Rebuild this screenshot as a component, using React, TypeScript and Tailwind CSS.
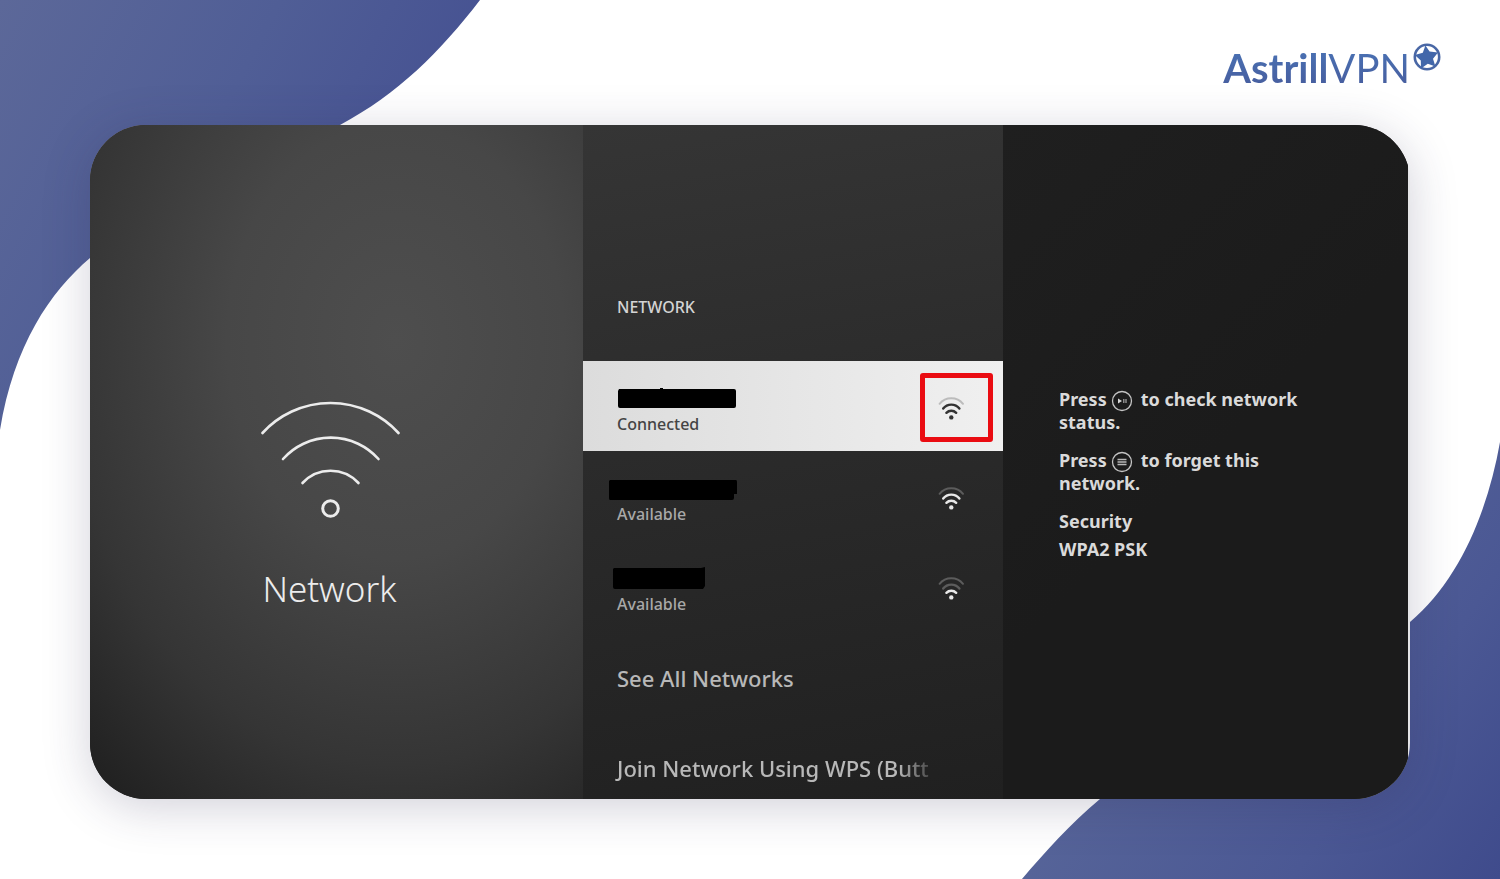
import type { ReactNode } from 'react';
import clsx from 'clsx';

const networks = [
  {
    status: 'Connected',
    strength: 2,
    active: true,
    mask: { className: '', path: 'M2 3H43V2H46V3H117Q119 3 119 5V20Q119 22 117 22H3Q1 22 1 20V5Z' },
  },
  {
    status: 'Available',
    strength: 2,
    active: false,
    mask: { className: '-ml-2', path: 'M1 4H127Q128 4 128 6V18H125V22Q125 24 123 24H1Q0 24 0 22V5Z' },
  },
  {
    status: 'Available',
    strength: 1,
    active: false,
    mask: { className: '-ml-1', path: 'M1 2H88L92 1V20L90 23H2Q0 23 0 21V3Z' },
  },
];

function Backdrop() {
  return (
    <>
      <svg className="absolute left-0 top-0" width="480" height="430" viewBox="0 0 480 430" aria-hidden="true">
        <defs>
          <linearGradient id="blobTop" x1="0" y1="0" x2="400" y2="210" gradientUnits="userSpaceOnUse">
            <stop offset="0" stopColor="#5c6899" />
            <stop offset="0.55" stopColor="#505e96" />
            <stop offset="1" stopColor="#465292" />
          </linearGradient>
        </defs>
        <path d="M0 0H480C440 52 398 94 340 125L200 200L90 258C50 292 14 345 0 430Z" fill="url(#blobTop)" />
      </svg>
      <svg className="absolute bottom-0 right-0" width="480" height="440" viewBox="0 0 480 440" aria-hidden="true">
        <defs>
          <linearGradient id="blobBottom" x1="120" y1="200" x2="480" y2="440" gradientUnits="userSpaceOnUse">
            <stop offset="0" stopColor="#576599" />
            <stop offset="0.6" stopColor="#4b5894" />
            <stop offset="1" stopColor="#3f4b8c" />
          </linearGradient>
        </defs>
        <path d="M480 3C468 71 440 141 390 183L240 280L80 360C50 385 25 413 2 440H480Z" fill="url(#blobBottom)" />
      </svg>
    </>
  );
}

function Logo() {
  return (
    <a href="#" aria-label="AstrillVPN" className="flex items-start gap-0.5">
      <span className="bg-gradient-to-b from-[#4a76b8] to-[#46599a] bg-clip-text font-['Lato',sans-serif] text-[40px] font-bold leading-[52px] text-transparent">
        Astrill<span className="font-normal">VPN</span>
      </span>
      <svg width="30" height="30" viewBox="0 0 30 30" aria-hidden="true">
        <circle cx="15" cy="15" r="12.2" fill="none" stroke="#4967a5" strokeWidth="2.6" />
        <path
          d="M13.4 3.4L17.6 9.6L26 10.4L21 16.8L23.4 24.6L15.8 21.8L9 26.4L8.8 18.6L2.8 13L10.8 10.8Z"
          fill="#4267aa"
        />
      </svg>
    </a>
  );
}

function SignalIcon({ strength, active }: { strength: number; active: boolean }) {
  const on = active ? '#333333' : '#e8e8e8';
  const off = active ? '#bcbcbc' : '#5c5c5c';

  return (
    <svg width="28" height="28" viewBox="0 0 28 28" fill="none" strokeWidth="2.4" strokeLinecap="round" aria-hidden="true">
      <path d="M2.6 11.8A15 15 0 0 1 26 11.8" stroke={off} strokeWidth="2" />
      <path d="M6.2 16.6A10.2 10.2 0 0 1 22.4 16.6" stroke={strength > 1 ? on : off} />
      <path d="M9.4 20.8A6.8 6.8 0 0 1 19.2 20.8" stroke={on} />
      <circle cx="14.3" cy="25.4" r="2.2" fill={on} />
    </svg>
  );
}

function KeyIcon({ children }: { children: ReactNode }) {
  return (
    <svg className="-my-1 ml-1 mr-2 inline-block align-middle" width="22" height="22" viewBox="0 0 22 22" fill="none" aria-hidden="true">
      <circle cx="11" cy="11" r="9.5" stroke="#c4c4c4" strokeWidth="1.3" />
      {children}
    </svg>
  );
}

export default function App() {
  return (
    <main className="relative min-h-screen overflow-hidden bg-white pb-20 font-['Noto_Sans',sans-serif]">
      <Backdrop />

      <header className="relative flex h-[125px] justify-end pr-[58px] pt-[42px]">
        <Logo />
      </header>

      <section className="relative mx-[90px] overflow-hidden rounded-[56px] bg-[#e4e4e6] pr-0.5 shadow-[0_8px_48px_rgba(45,42,80,0.22)]">
        <div className="grid grid-cols-[493fr_420fr_405fr] bg-[#1b1b1b]">
          {/* Title panel */}
          <div className="flex flex-col items-center bg-[radial-gradient(ellipse_90%_85%_at_62%_32%,#4e4e4e_0%,#474747_38%,#353535_74%,#222222_100%)] pr-3.5 pt-[274px]">
            <svg width="140" height="120" viewBox="0 0 140 120" fill="none" stroke="#ececec" strokeWidth="2.6" strokeLinecap="round" aria-hidden="true">
              <path d="M2.5 34A92 92 0 0 1 138.5 34" />
              <path d="M23 60A64 64 0 0 1 118.5 60" />
              <path d="M42.5 84A38 38 0 0 1 98.5 84" />
              <circle cx="70.5" cy="109.5" r="7.8" strokeWidth="3" />
            </svg>
            <h1 className="mt-[46px] text-[35px] font-light leading-[48px] text-[#ececec]">Network</h1>
          </div>

          {/* Network list */}
          <div className="bg-[linear-gradient(170deg,#353535_0%,#2b2b2b_45%,#202020_100%)]">
            <h2 className="h-[236px] pl-[34px] pt-[170px] text-base font-medium leading-6 text-[#d4d4d4]">NETWORK</h2>
            {networks.map(({ status, strength, active, mask }, i) => (
              <button
                key={i}
                type="button"
                className={clsx(
                  'relative flex h-[90px] w-full justify-between pl-[34px] pr-[38px] pt-[25px] text-left',
                  active ? 'bg-gradient-to-r from-[#dcdcdc] to-[#f0f0f0] text-[#444444]' : 'text-[#a8a8a8]',
                )}
              >
                <span className="flex flex-col">
                  <svg className={mask.className} width="130" height="26" viewBox="0 0 130 26" aria-hidden="true">
                    <path d={mask.path} fill="#000000" />
                  </svg>
                  <span className="text-base font-medium leading-6">{status}</span>
                </span>
                <span className="pt-1.5">
                  <SignalIcon strength={strength} active={active} />
                </span>
                {active && (
                  <span className="absolute right-2.5 top-3 h-[69px] w-[73px] rounded-[3px] border-[5px] border-[#ea0c12]" />
                )}
              </button>
            ))}
            <button
              type="button"
              className="flex h-[90px] w-full pl-[34px] pt-[31px] text-[22px] font-medium leading-8 text-[#b8b8b8]"
            >
              See All Networks
            </button>
            <button
              type="button"
              className="flex h-[78px] w-full whitespace-nowrap pl-[34px] pt-[31px] text-[22px] font-medium leading-8 text-[#b8b8b8] [mask-image:linear-gradient(to_right,black_315px,transparent_358px)]"
            >
              Join Network Using WPS (Butt
            </button>
          </div>

          {/* Remote key hints */}
          <div className="flex flex-col gap-[15px] bg-[linear-gradient(135deg,#1f1f1f_0%,#1b1b1b_50%)] pl-14 pt-[263px] text-lg font-bold leading-[23px] text-[#dadada]">
            <p>
              Press
              <KeyIcon>
                <path d="M7 8.6L11 11L7 13.4Z" fill="#d8d8d8" />
                <path d="M12.8 9V13M15 9V13" stroke="#a8a8a8" strokeWidth="1.2" />
              </KeyIcon>
              to check network
              <br />
              status.
            </p>
            <p>
              Press
              <KeyIcon>
                <path d="M6.5 8.6H15.5M6.5 11H15.5M6.5 13.4H15.5" stroke="#b8b8b8" strokeWidth="1.5" />
              </KeyIcon>
              to forget this
              <br />
              network.
            </p>
            <dl className="flex flex-col gap-[5px]">
              <dt>Security</dt>
              <dd>WPA2 PSK</dd>
            </dl>
          </div>
        </div>
      </section>
    </main>
  );
}
